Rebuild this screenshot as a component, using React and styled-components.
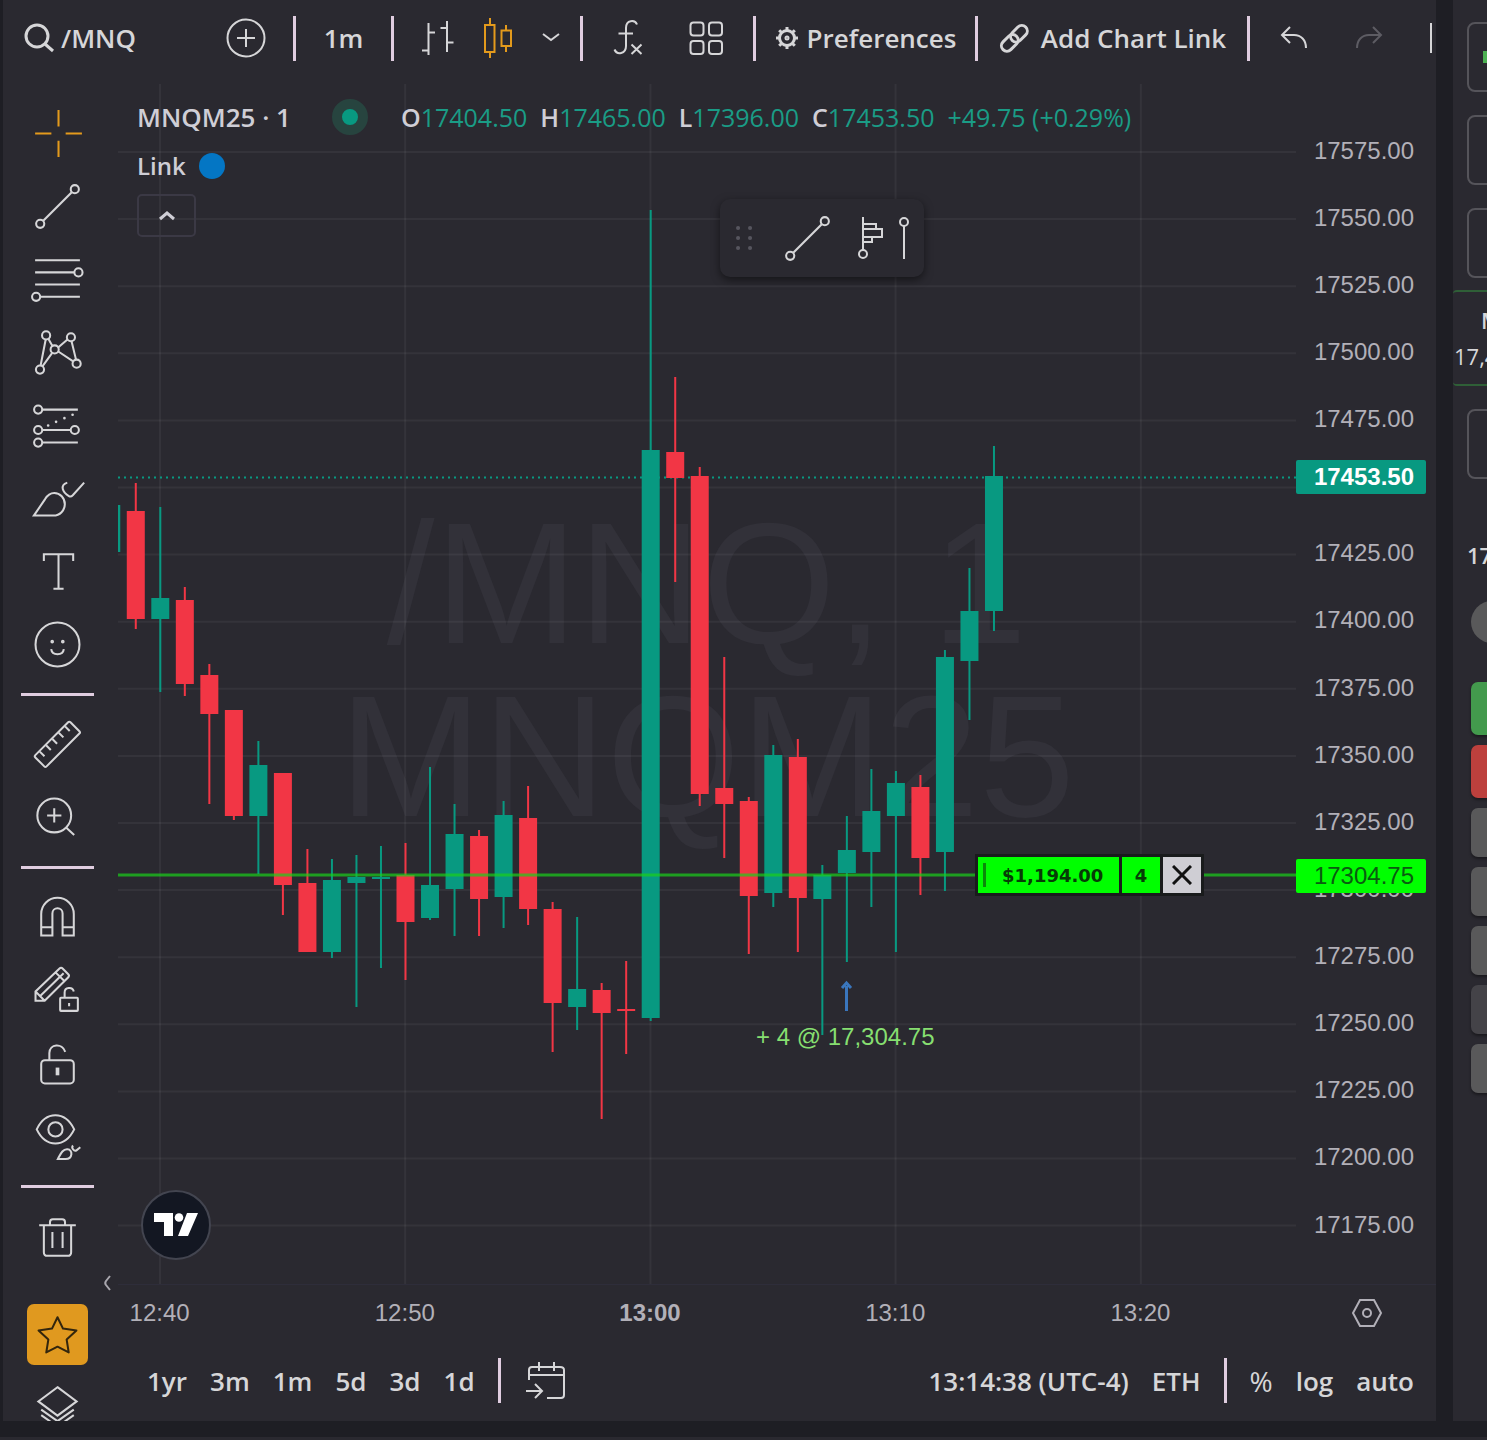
import React from 'react'
import styled, { createGlobalStyle, css } from 'styled-components'

const MINUTE = 24.52
const UP = '#089981'
const DOWN = '#f23645'

// [minutes from 12:40, direction, body top, body bottom, wick top, wick bottom]
const candles = [
   [-2, 'up', 505, 552, 505, 552],
   [-1, 'down', 511, 619, 483, 629],
   [0, 'up', 598, 619, 507, 692],
   [1, 'down', 600, 684, 587, 696],
   [2, 'down', 675, 714, 664, 804],
   [3, 'down', 710, 816, 710, 820],
   [4, 'up', 765, 816, 741, 874],
   [5, 'down', 773, 885, 773, 915],
   [6, 'down', 883, 952, 849, 952],
   [7, 'up', 880, 952, 859, 958],
   [8, 'up', 877, 883, 855, 1007],
   [9, 'up', 877, 879, 846, 968],
   [10, 'down', 875, 922, 843, 980],
   [11, 'up', 885, 918, 767, 920],
   [12, 'up', 834, 889, 804, 936],
   [13, 'down', 836, 899, 830, 936],
   [14, 'up', 815, 897, 801, 928],
   [15, 'down', 818, 909, 786, 925],
   [16, 'down', 909, 1003, 902, 1052],
   [17, 'up', 989, 1007, 917, 1030],
   [18, 'down', 990, 1013, 983, 1119],
   [19, 'down', 1009, 1011, 961, 1054],
   [20, 'up', 450, 1018, 210, 1021],
   [21, 'down', 452, 478, 377, 582],
   [22, 'down', 476, 794, 467, 806],
   [23, 'down', 788, 804, 657, 858],
   [24, 'down', 801, 896, 797, 954],
   [25, 'up', 755, 893, 745, 907],
   [26, 'down', 757, 898, 739, 952],
   [27, 'up', 875, 899, 865, 1035],
   [28, 'up', 850, 873, 816, 962],
   [29, 'up', 811, 852, 769, 907],
   [30, 'up', 783, 816, 771, 952],
   [31, 'down', 787, 858, 775, 895],
   [32, 'up', 657, 852, 650, 891],
   [33, 'up', 611, 661, 568, 720],
   [34, 'up', 476, 611, 446, 631],
]

const prices = Array.from({ length: 17 }, (_, i) => 17575 - i * 25)
const times = ['12:40', '12:50', '13:00', '13:10', '13:20']
const ranges = ['1yr', '3m', '1m', '5d', '3d', '1d']
const quotes = [
   ['O', '17404.50'],
   ['H', '17465.00'],
   ['L', '17396.00'],
   ['C', '17453.50'],
]

const Ring = ({ x, y }) => <circle cx={x} cy={y} r="2" />

const trendLine = (
   <>
      <Ring x={22.5} y={5.5} />
      <Ring x={5.5} y={22.5} />
      <path d="M7 21L21 7" />
   </>
)

const tools = [
   {
      name: 'Cross',
      accent: true,
      icon: <path d="M14.5 2.5v8M14.5 17.500v8M3 14h8M18 14h8" />,
   },
   { name: 'Trend line', icon: trendLine },
   {
      name: 'Fib retracement',
      icon: (
         <>
            <path d="M3 4.5h22M3 10.5h19.3M3 16.5h22M5.5 22.5H25" />
            <Ring x={24.3} y={10.5} />
            <Ring x={3.5} y={22.5} />
         </>
      ),
   },
   {
      name: 'XABCD pattern',
      icon: (
         <>
            <Ring x={8.4} y={5.6} />
            <Ring x={20.6} y={6.5} />
            <Ring x={12.6} y={12.5} />
            <Ring x={23.4} y={19.5} />
            <Ring x={5.4} y={22.4} />
            <path d="M8.2 7.6L5.7 20.4M9.5 7.3l2 3.5M14.3 11.5l4.6-3.9M14.4 13.5l7.3 4.9M20.9 8.5l2.2 9M11.4 14.2l-4.8 6.6" />
         </>
      ),
   },
   {
      name: 'Long position',
      icon: (
         <>
            <Ring x={4.5} y={6.2} />
            <Ring x={4.5} y={16.2} />
            <Ring x={22.5} y={16.2} />
            <Ring x={4.5} y={22.4} />
            <path d="M6.5 6.2H24M6.5 16.2h14M6.5 22.4H24" />
            <path
               d="M9.4 14h.01M13.3 12.2h.01M17.4 10.4h.01M21.4 8.700h.01"
               strokeWidth="1.3"
               strokeLinecap="round"
            />
         </>
      ),
   },
   {
      name: 'Brush',
      icon: (
         <>
            <path d="M2.4 22.4H12c3.2 0 5.6-2.6 5.6-5.6s-2.3-5.5-5.2-5.5c-2.1 0-3.4 1.1-4.5 3z" />
            <path d="M18.8 6.2c-1.5.5-2.6 1.5-2.2 3.1.4 1.6 1.8 2.8 3 3.5.7.4 1.3.2 1.9-.4l5.6-6.200" />
         </>
      ),
   },
   {
      name: 'Text',
      icon: <path d="M7.3 8.800V5.5h14.400v3.300M14.500 5.500v17M12 22.500h5" />,
   },
   {
      name: 'Emoji',
      icon: (
         <>
            <circle cx="14" cy="14" r="10.8" />
            <path d="M10.900 16.300c.2 1.600 1.500 2.500 3.100 2.500s2.900-.9 3.100-2.500" />
            <circle cx="11.400" cy="12.600" r=".4" />
            <circle cx="16.600" cy="12.600" r=".4" />
         </>
      ),
   },
   'line',
   {
      name: 'Measure',
      icon: (
         <>
            <rect
               x="1.8"
               y="10"
               width="24.4"
               height="7.8"
               rx=".8"
               transform="rotate(-45 14 14)"
            />
            <path d="M5.300 17.500l2.300 2.300M8.400 14.400l2.300 2.300M11.500 11.300l2.300 2.300M14.600 8.200l2.300 2.300M17.700 5.100L20 7.400" />
         </>
      ),
   },
   {
      name: 'Zoom in',
      icon: (
         <>
            <circle cx="12.4" cy="13" r="8.3" />
            <path d="M12.400 9.500v7M8.900 13h7M18.200 18.900l4 3.700" />
         </>
      ),
   },
   'line',
   {
      name: 'Magnet mode',
      icon: (
         <path d="M6 22.800V12.300a8 8 0 0 1 16 0v10.500h-5.500V12a2.500 2.500 0 0 0-5 0v10.800zM6 18.800h5.500M16.500 18.800H22" />
      ),
   },
   {
      name: 'Stay in drawing mode',
      icon: (
         <>
            <path d="M3.200 19v-4.500L15 3.200c.5-.5 1.100-.4 1.500 0L19.300 6c.4.4.4 1 0 1.500L7.700 19zM3.200 14.500L7.700 19M5.500 16.700L17 5.500M13 5.100l4.500 4.400" />
            <rect x="15.3" y="17.6" width="8.7" height="6.4" rx=".4" />
            <path d="M17.500 17.600V15c0-2.700 3.900-3 4.500-.5M19.700 20.100v1.600" />
         </>
      ),
   },
   {
      name: 'Lock all drawings',
      icon: (
         <>
            <rect x="6" y="12.400" width="16" height="11.400" rx="1.800" />
            <path d="M10 12.400V8.900c0-4.600 6.400-5.200 7.800-.6" />
            <path d="M14 16v3.800" strokeWidth="1.8" />
         </>
      ),
   },
   {
      name: 'Hide all drawings',
      icon: (
         <g transform="translate(0 .7)">
            <path d="M3.800 9.800C8.200.6 17.700.6 22.200 9.800c-4.500 9.200-14 9.200-18.400 0z" />
            <circle cx="13" cy="9.8" r="3.5" />
            <path d="M14.200 24.300h3.800c3.500 0 3.700-4.500.9-4.700-2.300-.2-3.300 2.100-4.700 4.700zM21.600 17.700c-1 1.100.5 3 1.600 2.500l2-1.600" />
         </g>
      ),
   },
   'line',
   {
      name: 'Remove drawings',
      icon: (
         <path d="M5 8.500h18M10.300 8.500V7c0-1 .4-1.500 1.400-1.500h4.600c1 0 1.400.5 1.400 1.500v1.500M7.300 8.500v13.200c0 1.100.7 1.800 1.800 1.800h9.800c1.100 0 1.800-.7 1.800-1.800V8.500M11.500 11.800v7.800M16.500 11.800v7.800" />
      ),
   },
]

const Icon = ({ children }) => (
   <IconSvg viewBox="0 0 28 28" aria-hidden="true">
      {children}
   </IconSvg>
)

function TopToolbar() {
   return (
      <TopBar>
         <SearchGroup>
            <ToolbarButton $gap={6}>
               <Drawing width="32" height="32" viewBox="0 0 32 32" $stroke={3}>
                  <circle cx="14" cy="14" r="11" />
                  <path d="M22 22l8 7" />
               </Drawing>
               /MNQ
            </ToolbarButton>
            <ToolbarButton aria-label="Compare symbols">
               <Drawing width="40" height="40" viewBox="0 0 40 40">
                  <circle cx="20" cy="20" r="18.5" />
                  <path d="M20 11v18M11 20h18" />
               </Drawing>
            </ToolbarButton>
         </SearchGroup>
         <Separator />
         <Group $width={95}>
            <ToolbarButton>1m</ToolbarButton>
         </Group>
         <Separator />
         <Group $width={186} $gap={29} $start={6}>
            <ToolbarButton aria-label="Bars">
               <Drawing width="33" height="36" viewBox="0 0 33 36">
                  <path d="M7.5 3v32M7.5 12.5H14M1 30.5h6.5M26 1v31M19.5 8H26M26 22.500h6.500" />
               </Drawing>
            </ToolbarButton>
            <ToolbarButton aria-label="Candles" $accent>
               <Drawing width="30" height="42" viewBox="0 0 30 42">
                  <path d="M2 8h9.500v27H2zM7 1v7M7 35v6M18.500 13.500H28V29h-9.500zM23 8v5.500M23 29v6" />
               </Drawing>
            </ToolbarButton>
            <ToolbarButton aria-label="Chart types">
               <Drawing width="18" height="12" viewBox="0 0 18 12">
                  <path d="M1 2l8 6 8-6" />
               </Drawing>
            </ToolbarButton>
         </Group>
         <Separator />
         <Group $width={170} $gap={44}>
            <ToolbarButton aria-label="Indicators">
               <Drawing width="32" height="38" viewBox="0 0 32 38">
                  <path d="M24 5.500C22 .5 13 .5 13 9v18c0 8-9 9.500-11.500 3.500M5.500 14.500H20M18.500 25.500l10 9.500M28.500 25.500l-10 9.500" />
               </Drawing>
            </ToolbarButton>
            <ToolbarButton aria-label="Templates">
               <Drawing width="35" height="35" viewBox="0 0 35 35">
                  <rect x="1.5" y="1.5" width="13" height="13" rx="3" />
                  <rect x="20" y="1.5" width="13" height="13" rx="3" />
                  <rect x="1.5" y="20" width="13" height="13" rx="3" />
                  <rect x="20" y="20" width="13" height="13" rx="3" />
               </Drawing>
            </ToolbarButton>
         </Group>
         <Separator />
         <Group $width={219}>
            <ToolbarButton>
               <Drawing width="24" height="24" viewBox="0 0 24 24" $stroke={3}>
                  <circle cx="12" cy="12" r="7.500" />
                  <circle cx="12" cy="12" r="1" />
                  <path d="M12 1v3M12 20v3M1 12h3M20 12h3M4.200 4.200l2.100 2.100M17.700 17.700l2.100 2.100M4.200 19.800l2.100-2.100M17.700 6.300l2.100-2.100" />
               </Drawing>
               Preferences
            </ToolbarButton>
         </Group>
         <Separator />
         <Group $width={269}>
            <ToolbarButton $gap={12}>
               <Drawing width="30" height="30" viewBox="0 0 30 30" $stroke={3}>
                  <g transform="rotate(-45 15 15)">
                     <rect x="-1" y="10" width="19" height="11" rx="5.500" />
                     <rect x="12" y="10" width="19" height="11" rx="5.500" />
                  </g>
               </Drawing>
               Add Chart Link
            </ToolbarButton>
         </Group>
         <Separator />
         <UndoGroup>
            <ToolbarButton aria-label="Undo">
               <Drawing width="28" height="24" viewBox="0 0 28 24">
                  <path d="M10 1L2 9l8 8M2 9h12c7 0 12 5 12 13" />
               </Drawing>
            </ToolbarButton>
            <ToolbarButton aria-label="Redo" $dim>
               <Drawing width="28" height="24" viewBox="0 0 28 24">
                  <path d="M18 1l8 8-8 8M26 9H14C7 9 2 14 2 22" />
               </Drawing>
            </ToolbarButton>
            <Edge />
         </UndoGroup>
      </TopBar>
   )
}

function DrawingTools() {
   return (
      <Sidebar>
         {tools.map((tool, i) =>
            tool === 'line' ? (
               <ToolLine key={i} />
            ) : (
               <ToolButton
                  key={tool.name}
                  aria-label={tool.name}
                  $accent={tool.accent}
               >
                  <Icon>{tool.icon}</Icon>
               </ToolButton>
            )
         )}
         <FavoriteSlot>
            <FavoriteButton aria-label="Favorite drawings">
               <Icon>
                  <path
                     d="M14 5.500l2.700 5.600 6.600.9-4.800 4.500 1 6.300L14 20l-5.500 2.800 1-6.300L4.700 12l6.600-.9z"
                     strokeLinejoin="round"
                  />
               </Icon>
            </FavoriteButton>
         </FavoriteSlot>
         <ToolButton aria-label="Object tree">
            <Icon>
               <path d="M14 4.500l9.400 7-9.400 7-9.400-7zM6 15.500l8 5.700 8-5.700M6 18.200l8 5.700 8-5.700" />
            </Icon>
         </ToolButton>
         <HideTools aria-label="Hide drawing toolbar">
            <Drawing width="8" height="16" viewBox="0 0 8 16">
               <path d="M7 1L3 6Q1.500 8 3 10l4 5" />
            </Drawing>
         </HideTools>
      </Sidebar>
   )
}

function Chart() {
   return (
      <ChartArea>
         <Watermark>
            <span>/MNQ, 1</span>
            <span>MNQM25</span>
         </Watermark>
         <Plot
            viewBox="118 84 1178 1200"
            preserveAspectRatio="none"
            role="img"
            aria-label="MNQM25 one minute candles"
         >
            <g stroke="#fff" strokeOpacity=".05" strokeWidth="2">
               {prices.map((price, i) => (
                  <path key={price} d={`M118 ${152 + i * 67.1}H1296`} />
               ))}
               {times.map((time, i) => (
                  <path key={time} d={`M${160 + i * 245.2} 84V1284`} />
               ))}
            </g>
            <path
               d="M118 477.500H1296"
               stroke={UP}
               strokeWidth="2"
               strokeDasharray="2 4"
            />
            {candles.map(([minute, side, top, bottom, high, low]) => {
               const x = 160.3 + minute * MINUTE
               return (
                  <g key={minute} fill={side === 'up' ? UP : DOWN}>
                     <rect x={x - 1} y={high} width="2" height={low - high} />
                     <rect x={x - 9} y={top} width="18" height={bottom - top} />
                  </g>
               )
            })}
            <path
               d="M118 875H1296"
               stroke="#19d019"
               strokeOpacity=".7"
               strokeWidth="3"
            />
            <path
               d="M846.500 1011V986M842 988l4.500-5 4.500 5"
               stroke="#3a76bd"
               strokeWidth="3"
               fill="none"
            />
         </Plot>
         <Legend>
            <SymbolRow>
               <h1>MNQM25 · 1</h1>
               <MarketDot />
               <Quotes>
                  {quotes.map(([label, value]) => (
                     <span key={label}>
                        <b>{label}</b>
                        {value}
                     </span>
                  ))}
                  <span>+49.75 (+0.29%)</span>
               </Quotes>
            </SymbolRow>
            <LinkRow>
               Link <LinkDot />
            </LinkRow>
            <Collapse aria-label="Collapse legend">
               <Drawing width="18" height="10" viewBox="0 0 18 10" $stroke={3}>
                  <path d="M2 8l7-6 7 6" />
               </Drawing>
            </Collapse>
         </Legend>
         <FloatingTools>
            <Drawing width="25" height="26" viewBox="0 0 25 26">
               <path
                  d="M4 3h.1M16 3h.1M4 13h.1M16 13h.1M4 23h.1M16 23h.1"
                  stroke="#56555e"
                  strokeWidth="4"
                  strokeLinecap="round"
               />
            </Drawing>
            <ToolbarButton aria-label="Trend line">
               <Icon>{trendLine}</Icon>
            </ToolbarButton>
            <ToolbarButton aria-label="Anchored volume profile">
               <Drawing width="54" height="46" viewBox="0 0 54 46">
                  <path d="M7 2v33M7 9h13v5h6v8H7M7 14h13M7 27h9v-5" />
                  <circle cx="7" cy="39" r="4" />
                  <circle cx="48" cy="7" r="4" />
                  <path d="M48 11v33" />
               </Drawing>
            </ToolbarButton>
         </FloatingTools>
         <Position>
            <Profit>$1,194.00</Profit>
            <Quantity>4</Quantity>
            <ClosePosition aria-label="Close position">
               <Drawing width="20" height="20" viewBox="0 0 20 20" $stroke={3}>
                  <path d="M1 1l18 18M19 1L1 19" />
               </Drawing>
            </ClosePosition>
         </Position>
         <Execution>+ 4 @ 17,304.75</Execution>
         <Logo href="#tradingview" aria-label="TradingView">
            <svg width="44" height="24" viewBox="0 0 44 24" fill="#fff">
               <path d="M0 0h19v23h-9V9H0zM33 0h11l-10 23H24z" />
               <circle cx="25" cy="4.5" r="4.3" />
            </svg>
         </Logo>
      </ChartArea>
   )
}

function OrderPanel() {
   return (
      <Order>
         <OrderInput aria-label="Account" $swatch />
         <OrderInput aria-label="Order type" />
         <OrderInput aria-label="Time in force" />
         <Quote>
            <p>M</p>
            <strong>17,4</strong>
         </Quote>
         <OrderInput aria-label="Quantity" />
         <Total>17</Total>
         <Round aria-label="Decrease" />
         <OrderButtons>
            <OrderButton aria-label="Buy" $tall $color="#439a4d" />
            <OrderButton aria-label="Sell" $tall $color="#bd403d" />
            <OrderButton aria-label="Join bid" $color="#59595a" />
            <OrderButton aria-label="Join ask" $color="#59595a" />
            <OrderButton aria-label="Reverse" $color="#59595a" />
            <OrderButton aria-label="Cancel" $color="#444348" />
            <OrderButton aria-label="Flatten" $color="#59595a" />
         </OrderButtons>
      </Order>
   )
}

function App() {
   return (
      <>
         <GlobalStyle />
         <Page>
            <Panel>
               <TopToolbar />
               <Workspace>
                  <DrawingTools />
                  <ChartColumn>
                     <ChartRow>
                        <Chart />
                        <PriceAxis>
                           {prices.map((price) => (
                              <li key={price}>
                                 {price === 17450 ? '' : price.toFixed(2)}
                              </li>
                           ))}
                           <PriceTag $top={393} $bg={UP} $color="#fff" $bold>
                              17453.50
                           </PriceTag>
                           <PriceTag $top={792} $bg="#00ff00" $color="#0a5c10">
                              17304.75
                           </PriceTag>
                        </PriceAxis>
                     </ChartRow>
                     <TimeRow>
                        <TimeAxis>
                           {times.map((time) => (
                              <TimeLabel key={time} $bold={time === '13:00'}>
                                 {time}
                              </TimeLabel>
                           ))}
                        </TimeAxis>
                        <AxisSettings aria-label="Axis settings">
                           <Drawing width="32" height="30" viewBox="0 0 32 30">
                              <path d="M9 2h14l7 13-7 13H9L2 15z" />
                              <circle cx="16" cy="15" r="4" />
                           </Drawing>
                        </AxisSettings>
                     </TimeRow>
                     <BottomBar>
                        {ranges.map((range) => (
                           <ToolbarButton key={range}>{range}</ToolbarButton>
                        ))}
                        <Separator />
                        <GoTo aria-label="Go to date">
                           <Drawing width="40" height="40" viewBox="0 0 40 40">
                              <path d="M3 19V9c0-2 1-3 3-3h28c3 0 4 1 4 3v25c0 2-1 3-3 3H21M3 14h35M13 1v9M28 1v9M0 30h16M9 23l7 7-7 7" />
                           </Drawing>
                        </GoTo>
                        <Spacer />
                        <ToolbarButton>13:14:38 (UTC-4)</ToolbarButton>
                        <ToolbarButton>ETH</ToolbarButton>
                        <Separator />
                        <PercentButton>%</PercentButton>
                        <ToolbarButton>log</ToolbarButton>
                        <ToolbarButton>auto</ToolbarButton>
                     </BottomBar>
                  </ChartColumn>
               </Workspace>
            </Panel>
            <OrderPanel />
         </Page>
      </>
   )
}

export default App

const GlobalStyle = createGlobalStyle`
   * {
      box-sizing: border-box;
   }
   body {
      margin: 0;
      background: #1e1e24;
      color: #d6d6d8;
      font-family: 'Open Sans', 'Noto Sans', sans-serif;
      overflow: hidden;
   }
   button {
      border: 0;
      padding: 0;
      background: none;
      color: inherit;
      font: inherit;
      cursor: pointer;
   }
   h1, p, ul {
      margin: 0;
      padding: 0;
   }
`
const Page = styled.main`
   height: 100vh;
   padding-left: 3px;
   display: flex;
   gap: 17px;
   border-bottom: 3px solid #2a2930;
`
const Panel = styled.section`
   flex: 1;
   min-width: 0;
   margin-bottom: 16px;
   display: flex;
   flex-direction: column;
   background: #2a2930;
   overflow: hidden;
`
const TopBar = styled.header`
   flex: none;
   height: 84px;
   padding-bottom: 8px;
   display: flex;
   align-items: center;
`
const Group = styled.div`
   width: ${({ $width }) => $width}px;
   padding-left: ${({ $start = 0 }) => $start}px;
   flex: none;
   display: flex;
   align-items: center;
   justify-content: center;
   gap: ${({ $gap = 0 }) => $gap}px;
`
const SearchGroup = styled.div`
   width: 290px;
   padding: 0 27px 0 20px;
   flex: none;
   display: flex;
   align-items: center;
   justify-content: space-between;
`
const UndoGroup = styled.div`
   flex: 1;
   padding: 0 4px 0 30px;
   display: flex;
   align-items: center;
   justify-content: space-between;
`
const Edge = styled.span`
   width: 2px;
   height: 30px;
   background: #d6d6d8;
`
const Separator = styled.span`
   flex: none;
   width: 3px;
   height: 45px;
   background: #e0cde0;
`
const ToolbarButton = styled.button`
   display: flex;
   align-items: center;
   gap: ${({ $gap = 8 }) => $gap}px;
   font-size: 26px;
   font-weight: 600;
   line-height: 36px;
   white-space: nowrap;
   color: ${({ $accent, $dim }) =>
      ($accent && '#e39a1c') || ($dim && '#5d5c63') || '#d6d6d8'};
`
const PercentButton = styled(ToolbarButton)`
   font-size: 28px;
   font-weight: 400;
`
const Drawing = styled.svg`
   flex: none;
   display: block;
   fill: none;
   stroke: currentColor;
   stroke-width: ${({ $stroke = 2 }) => $stroke};
`
const IconSvg = styled.svg`
   flex: none;
   display: block;
   width: 57px;
   height: 57px;
   fill: none;
   stroke: currentColor;
   stroke-width: 1;
`
const Workspace = styled.div`
   flex: 1;
   min-height: 0;
   display: flex;
`
const Sidebar = styled.nav`
   position: relative;
   flex: none;
   width: 115px;
   padding: 13px 6px 0 0;
   display: flex;
   flex-direction: column;
   align-items: center;
   overflow: hidden;
`
const ToolButton = styled.button`
   flex: none;
   height: 73px;
   color: ${({ $accent }) => ($accent ? '#e39a1c' : '#d6d6d8')};
`
const ToolLine = styled.hr`
   flex: none;
   width: 73px;
   height: 3px;
   margin: 12px 0;
   border: 0;
   background: #e0cde0;
`
const FavoriteSlot = styled.div`
   flex: none;
   height: 97px;
   padding-top: 25px;
   display: flex;
   align-items: center;
`
const FavoriteButton = styled.button`
   width: 61px;
   height: 61px;
   display: flex;
   align-items: center;
   justify-content: center;
   border-radius: 7px;
   background: #e0991f;
   color: #33260d;
`
const HideTools = styled.button`
   position: absolute;
   right: 7px;
   bottom: 130px;
   color: #a9a7ae;
`
const ChartColumn = styled.div`
   flex: 1;
   min-width: 0;
   display: flex;
   flex-direction: column;
`
const ChartRow = styled.div`
   flex: 1;
   min-height: 0;
   display: flex;
`
const ChartArea = styled.div`
   position: relative;
   flex: 1;
   min-width: 0;
   display: flex;
`
const Plot = styled.svg`
   position: relative;
   display: block;
   width: 100%;
   height: 100%;
`
const Watermark = styled.div`
   position: absolute;
   inset: 0;
   display: flex;
   flex-direction: column;
   align-items: center;
   justify-content: center;
   padding-bottom: 28px;
   font-family: 'Liberation Sans', Arial, sans-serif;
   font-size: 172px;
   line-height: 173px;
   white-space: nowrap;
   color: #323139;
`
const Legend = styled.div`
   position: absolute;
   top: 13px;
   left: 19px;
   color: #cfced6;
`
const SymbolRow = styled.div`
   height: 40px;
   display: flex;
   align-items: center;
   white-space: nowrap;

   h1 {
      width: 195px;
      font-size: 26px;
      font-weight: 600;
      line-height: 40px;
   }
`
const MarketDot = styled.span`
   width: 36px;
   height: 36px;
   margin-right: 33px;
   border: 10px solid #27443f;
   border-radius: 50%;
   background: ${UP};
`
const Quotes = styled.div`
   display: flex;
   gap: 13px;
   font-size: 25px;
   color: #1a9c86;

   b {
      font-weight: 600;
      color: #cfced6;
   }
`
const LinkRow = styled.div`
   height: 57px;
   display: flex;
   align-items: center;
   gap: 13px;
   font-size: 24px;
   font-weight: 600;
`
const LinkDot = styled.span`
   width: 26px;
   height: 26px;
   border-radius: 50%;
   background: #0476c4;
`
const Collapse = styled.button`
   width: 59px;
   height: 43px;
   display: flex;
   align-items: center;
   justify-content: center;
   border: 2px solid #3b3945;
   border-radius: 5px;
`
const FloatingTools = styled.div`
   position: absolute;
   top: 115px;
   left: 602px;
   width: 204px;
   height: 78px;
   padding-left: 14px;
   display: flex;
   align-items: center;
   gap: 20px;
   border-radius: 10px;
   background: #2a2930;
   box-shadow: 0 3px 8px rgba(0, 0, 0, 0.5);
`
const Position = styled.div`
   position: absolute;
   top: 64.2%;
   right: 92px;
   height: 42px;
   padding: 3px;
   display: flex;
   gap: 3px;
   background: #191b1c;
   font-family: 'DejaVu Sans', sans-serif;
   font-size: 18px;
   font-weight: 700;
   color: #063c06;
`
const cell = css`
   display: flex;
   align-items: center;
   justify-content: center;
   background: #00ff00;
`
const Profit = styled.span`
   ${cell}
   width: 141px;
   padding-left: 5px;
   justify-content: flex-start;

   &::before {
      content: '';
      width: 3px;
      height: 24px;
      margin-right: 16px;
      background: #0a8a0a;
   }
`
const Quantity = styled.span`
   ${cell}
   width: 38px;
`
const ClosePosition = styled.button`
   ${cell}
   width: 38px;
   background: #cfced4;
   color: #111;
`
const Execution = styled.p`
   position: absolute;
   top: 78.2%;
   left: 638px;
   font-family: 'Liberation Sans', Arial, sans-serif;
   font-size: 24px;
   line-height: 30px;
   white-space: nowrap;
   color: #86df70;
`
const Logo = styled.a`
   position: absolute;
   left: 23px;
   bottom: 24px;
   width: 70px;
   height: 70px;
   display: flex;
   align-items: center;
   justify-content: center;
   border: 2px solid #434550;
   border-radius: 50%;
   background: #131722;
`
const PriceAxis = styled.ul`
   position: relative;
   flex: none;
   width: 140px;
   padding: 33px 22px 26px 0;
   display: flex;
   flex-direction: column;
   font-family: 'Liberation Sans', Arial, sans-serif;
   font-size: 24px;
   color: #b2b0b8;

   li {
      flex: 1;
      display: flex;
      align-items: center;
      justify-content: flex-end;
   }
`
const PriceTag = styled.li`
   && {
      position: absolute;
      top: ${({ $top }) => ($top / 1200) * 100}%;
      left: 0;
      width: 130px;
      height: 34px;
      padding-right: 12px;
      transform: translateY(-50%);
      border-radius: 2px;
      background: ${({ $bg }) => $bg};
      color: ${({ $color }) => $color};
      font-weight: ${({ $bold }) => ($bold ? 700 : 400)};
   }
`
const TimeRow = styled.div`
   flex: none;
   height: 58px;
   padding-bottom: 2px;
   display: flex;
   align-items: center;
   border-top: 1px solid #2e2d3a;
   font-family: 'Liberation Sans', Arial, sans-serif;
   font-size: 24px;
   color: #b2b0b8;
`
const TimeAxis = styled.div`
   flex: 1;
   display: flex;
   margin-left: -81px;
   padding-right: 33px;
`
const TimeLabel = styled.time`
   flex: 1;
   text-align: center;
   font-weight: ${({ $bold }) => ($bold ? 700 : 400)};
`
const AxisSettings = styled.button`
   width: 140px;
   padding-left: 2px;
   display: flex;
   justify-content: center;
   color: #b2b0b8;
`
const BottomBar = styled.footer`
   flex: none;
   height: 79px;
   padding: 0 22px 2px 29px;
   display: flex;
   align-items: center;
   gap: 23px;
`
const GoTo = styled(ToolbarButton)`
   padding-left: 2px;
`
const Spacer = styled.span`
   flex: 1;
`
const Order = styled.aside`
   flex: none;
   width: 34px;
   margin-bottom: 16px;
   padding-top: 22px;
   background: #2a2930;
   overflow: hidden;
`
const OrderInput = styled.input`
   display: block;
   width: 240px;
   height: 70px;
   margin: 0 0 23px 14px;
   border: 2px solid #55545a;
   border-radius: 8px;
   background: ${({ $swatch }) =>
      $swatch
         ? 'linear-gradient(#4cb052, #4cb052) 14px center / 12px 12px no-repeat'
         : 'transparent'};
   color: inherit;
`
const Quote = styled.div`
   width: 240px;
   height: 96px;
   margin: -11px 0 23px;
   padding: 10px 1px;
   border: 2px solid #2f5f37;
   border-width: 2px 0;
   border-radius: 4px;
   font-size: 22px;
   line-height: 36px;

   p {
      padding-left: 27px;
      font-weight: 600;
   }
   strong {
      font-weight: 400;
   }
`
const Total = styled.p`
   height: 64px;
   margin-top: 36px;
   padding: 22px 0 0 14px;
   box-sizing: content-box;
   font-size: 22px;
   font-weight: 600;
   line-height: 36px;
`
const Round = styled.button`
   display: block;
   width: 42px;
   height: 42px;
   margin: 0 0 39px 18px;
   border-radius: 50%;
   background: #59595a;
`
const OrderButtons = styled.div`
   padding-left: 18px;
   display: flex;
   flex-direction: column;
   gap: 10px;
`
const OrderButton = styled.button`
   width: 200px;
   height: ${({ $tall }) => ($tall ? 53 : 49)}px;
   border-radius: 7px;
   background: ${({ $color }) => $color};
   box-shadow: 0 2px 3px rgba(0, 0, 0, 0.4);
`
